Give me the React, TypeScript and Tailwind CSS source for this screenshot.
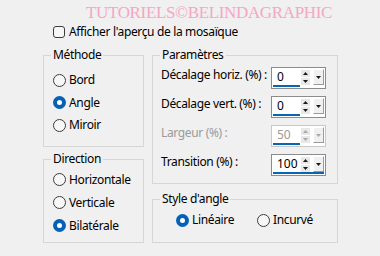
import clsx from "clsx";
import type { ReactNode } from "react";

const ui = "font-['Noto_Sans','Liberation_Sans',sans-serif] text-[12px] tracking-[-0.35px] leading-[16px] text-black";

function Radio({ label, checked }: { label: string; checked?: boolean }) {
  return (
    <span className="flex items-center gap-[3px] whitespace-nowrap">
      {checked ? (
        <span className="flex h-[13px] w-[13px] items-center justify-center rounded-full bg-[#0560b6]">
          <span className="h-[5px] w-[5px] rounded-full bg-white" />
        </span>
      ) : (
        <span className="h-[13px] w-[13px] rounded-full border border-[#3c3c3c] bg-[#f7f7f7]" />
      )}
      <span>{label}</span>
    </span>
  );
}

function Group({ title, className, children }: { title: string; className: string; children: ReactNode }) {
  return (
    <fieldset className={clsx("border border-[#d6d6d6] p-0", className)}>
      <legend className="ml-[7px] px-[2px] leading-[16px] whitespace-nowrap">{title}</legend>
      {children}
    </fieldset>
  );
}

function Arrow({ up, muted }: { up?: boolean; muted?: boolean }) {
  return (
    <svg width="5" height="3" viewBox="0 0 5 3">
      <path d={up ? "M0 3L2.5 0L5 3Z" : "M0 0H5L2.5 3Z"} fill={muted ? "#a8a8a8" : "#1a1a1a"} />
    </svg>
  );
}

function Spinner({ value, bar, disabled }: { value: string; bar: number; disabled?: boolean }) {
  return (
    <div
      className={clsx(
        "flex h-[22px] w-[55px] shrink-0 flex-col border bg-white px-[1px] pt-[1px]",
        disabled ? "border-[#c8c8c8]" : "border-[#8c8c8c]",
      )}
    >
      <div className="flex h-[17px] items-center">
        <span className={clsx("flex-1 pl-[4px] tracking-normal", disabled && "text-[#9a9a9a]")}>{value}</span>
        <div className="mr-[3px] flex w-[9px] flex-col gap-[1px]">
          <span className="flex h-[7px] items-center justify-center bg-[#e8e8e8]">
            <Arrow up muted={disabled} />
          </span>
          <span className="flex h-[7px] items-center justify-center bg-[#e8e8e8]">
            <Arrow muted={disabled} />
          </span>
        </div>
        <span className="flex h-[16px] w-[11px] items-center justify-center border border-b-[#9a9a9a] border-l-white border-r-[#9a9a9a] border-t-white bg-[#f0f0f0]">
          <Arrow muted={disabled} />
        </span>
      </div>
      <div className="mt-auto mb-[1px] h-[2px] bg-[#0a64b4]" style={{ width: bar }} />
    </div>
  );
}

function Field({ label, value, bar, disabled }: { label: string; value: string; bar: number; disabled?: boolean }) {
  return (
    <div className="flex h-[22px] items-start">
      <span className={clsx("flex-1 whitespace-nowrap", disabled && "text-[#9a9a9a]")}>{label}</span>
      <Spinner value={value} bar={bar} disabled={disabled} />
    </div>
  );
}

export default function App() {
  return (
    <div className={clsx("flex h-[256px] w-[380px] flex-col bg-[#f0f0f0] pt-[4px]", ui)}>
      <div className="ml-[86px] h-[18px] font-['Liberation_Serif',serif] text-[17px] leading-[18px] tracking-[-0.35px] text-[#f5a6c4]">
        TUTORIELS©BELINDAGRAPHIC
      </div>

      <label className="mt-[2px] ml-[53px] flex h-[16px] items-center gap-[4px]">
        <span className="h-[12px] w-[12px] rounded-[3px] border border-[#3c3c3c] bg-[#f7f7f7]" />
        <span>Afficher l'aperçu de la mosaïque</span>
      </label>

      <div className="mt-[7px] ml-[43px] flex gap-[8px]">
        <div className="flex w-[101px] flex-col gap-[4px]">
          <Group title="Méthode" className="h-[100px]">
            <div className="flex flex-col pt-[6px] pl-[9px]">
              <div className="flex h-[22.5px] items-center"><Radio label="Bord" /></div>
              <div className="flex h-[22.5px] items-center"><Radio label="Angle" checked /></div>
              <div className="flex h-[22.5px] items-center"><Radio label="Miroir" /></div>
            </div>
          </Group>
          <Group title="Direction" className="h-[92px]">
            <div className="flex flex-col pt-[1px] pl-[9px]">
              <div className="flex h-[23px] items-center"><Radio label="Horizontale" /></div>
              <div className="flex h-[23px] items-center"><Radio label="Verticale" /></div>
              <div className="flex h-[23px] items-center"><Radio label="Bilatérale" checked /></div>
            </div>
          </Group>
        </div>

        <div className="flex w-[186px] flex-col gap-[7px]">
          <Group title="Paramètres" className="h-[137px]">
            <div className="flex flex-col gap-[7px] pt-[4px] pr-[11px] pl-[8px]">
              <Field label="Décalage horiz. (%) :" value="0" bar={27} />
              <Field label="Décalage vert. (%) :" value="0" bar={27} />
              <Field label="Largeur (%) :" value="50" bar={27} disabled />
              <Field label="Transition (%) :" value="100" bar={51} />
            </div>
          </Group>
          <Group title="Style d'angle" className="h-[52px]">
            <div className="mt-[2px] flex h-[22px] items-center pl-[23px]">
              <div className="w-[81px]"><Radio label="Linéaire" checked /></div>
              <Radio label="Incurvé" />
            </div>
          </Group>
        </div>
      </div>
    </div>
  );
}
